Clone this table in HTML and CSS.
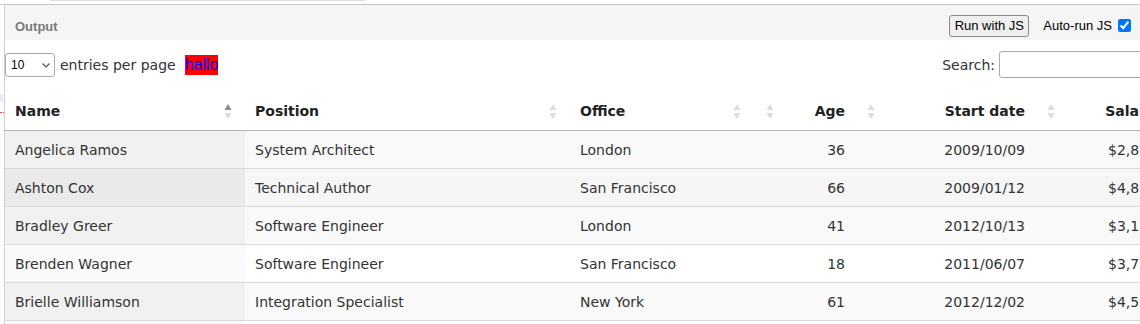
FILE: index.html
```html
<!DOCTYPE html>
<html>
<head>
<meta charset="utf-8">
<link rel="stylesheet" href="styles.css">
</head>
<body>
<div class="topstrip"><div class="tabedge"></div></div>
<div class="topline"></div>
<div class="page">
  <div class="gutter">
    <div class="mark-blue"></div>
    <div class="mark-red"></div>
  </div>
  <div class="frame">
    <div class="outbar">
      <span class="outtitle">Output</span>
      <div class="outactions">
        <button class="runbtn">Run with JS</button>
        <label class="autorun">Auto-run JS <input type="checkbox" checked></label>
      </div>
    </div>
    <div class="dt">
      <div class="controls">
        <div class="length">
          <div class="lenwrap">
            <select class="lensel"><option>10</option><option>25</option><option>50</option></select>
            <svg class="chev" width="8" height="5" viewBox="0 0 8 5"><path d="M0.5 0.5 L4 4 L7.5 0.5" fill="none" stroke="#555" stroke-width="1.2"/></svg>
          </div>
          <span class="lentext">entries per page</span>
          <span class="hallo">hallo</span>
        </div>
        <div class="search">
          <span>Search:</span>
          <input class="searchbox" type="text">
        </div>
      </div>
      <table class="grid">
        <colgroup>
          <col class="c-name"><col class="c-pos"><col class="c-office"><col class="c-age"><col class="c-date"><col class="c-sal">
        </colgroup>
        <thead>
          <tr>
            <th><div class="hd"><span>Name</span><svg class="sort" width="8" height="17" viewBox="0 0 8 17"><path class="up active" d="M4 1 L7.5 7 L0.5 7 Z"/><path class="dn" d="M0.5 10 L7.5 10 L4 16 Z"/></svg></div></th>
            <th><div class="hd"><span>Position</span><svg class="sort" width="8" height="17" viewBox="0 0 8 17"><path class="up" d="M4 1 L7.5 7 L0.5 7 Z"/><path class="dn" d="M0.5 10 L7.5 10 L4 16 Z"/></svg></div></th>
            <th><div class="hd"><span>Office</span><svg class="sort" width="8" height="17" viewBox="0 0 8 17"><path class="up" d="M4 1 L7.5 7 L0.5 7 Z"/><path class="dn" d="M0.5 10 L7.5 10 L4 16 Z"/></svg></div></th>
            <th><div class="hd num"><span>Age</span><svg class="sort" width="8" height="17" viewBox="0 0 8 17"><path class="up" d="M4 1 L7.5 7 L0.5 7 Z"/><path class="dn" d="M0.5 10 L7.5 10 L4 16 Z"/></svg></div></th>
            <th><div class="hd num"><span>Start date</span><svg class="sort" width="8" height="17" viewBox="0 0 8 17"><path class="up" d="M4 1 L7.5 7 L0.5 7 Z"/><path class="dn" d="M0.5 10 L7.5 10 L4 16 Z"/></svg></div></th>
            <th><div class="hd num"><span>Salary</span><svg class="sort" width="8" height="17" viewBox="0 0 8 17"><path class="up" d="M4 1 L7.5 7 L0.5 7 Z"/><path class="dn" d="M0.5 10 L7.5 10 L4 16 Z"/></svg></div></th>
          </tr>
        </thead>
        <tbody>
          <tr class="odd"><td class="sorted">Angelica Ramos</td><td>System Architect</td><td>London</td><td class="r">36</td><td class="r">2009/10/09</td><td class="r sal">$2,875</td></tr>
          <tr class="even hover"><td class="sorted">Ashton Cox</td><td>Technical Author</td><td>San Francisco</td><td class="r">66</td><td class="r">2009/01/12</td><td class="r sal">$4,850</td></tr>
          <tr class="odd"><td class="sorted">Bradley Greer</td><td>Software Engineer</td><td>London</td><td class="r">41</td><td class="r">2012/10/13</td><td class="r sal">$3,132</td></tr>
          <tr class="even"><td class="sorted">Brenden Wagner</td><td>Software Engineer</td><td>San Francisco</td><td class="r">18</td><td class="r">2011/06/07</td><td class="r sal">$3,750</td></tr>
          <tr class="odd"><td class="sorted">Brielle Williamson</td><td>Integration Specialist</td><td>New York</td><td class="r">61</td><td class="r">2012/12/02</td><td class="r sal">$4,525</td></tr>
          <tr class="even"><td class="sorted">Bruno Nash</td><td>Software Engineer</td><td>London</td><td class="r">38</td><td class="r">2011/05/03</td><td class="r sal">$1,635</td></tr>
        </tbody>
      </table>
    </div>
  </div>
</div>
</body>
</html>
```
FILE: styles.css
```css
html, body {
  margin: 0;
  padding: 0;
  overflow: hidden;
  background: #fff;
}
body {
  width: 1140px;
  height: 324px;
  font-family: "DejaVu Sans", Verdana, sans-serif;
  color: #333;
}
.topstrip {
  height: 4px;
}
.tabedge {
  margin-left: 50px;
  width: 315px;
  height: 1px;
  background: #dcdcdc;
}
.topline {
  height: 1px;
  background: #c6c6c6;
}
.page {
  display: flex;
  align-items: stretch;
  height: 400px;
}
.gutter {
  width: 4px;
  flex: none;
  display: flex;
  flex-direction: column;
}
.mark-blue {
  margin-top: 89px;
  width: 3px;
  height: 8px;
  background: #e3ecf8;
}
.mark-red {
  margin-top: 10px;
  width: 4px;
  height: 0;
  border-top: 1px dotted #e05050;
}
.frame {
  flex: 1;
  min-width: 0;
  border-left: 1px solid #cfcfcf;
}
.outbar {
  height: 35px;
  box-sizing: border-box;
  padding: 6px 9px 0 10px;
  background: #f5f5f5;
  display: flex;
  align-items: center;
  justify-content: space-between;
}
.outtitle {
  font-family: "Liberation Sans", Arial, sans-serif;
  font-weight: bold;
  font-size: 13px;
  color: #7a7a7a;
  padding-top: 1px;
}
.outactions {
  display: flex;
  align-items: center;
  gap: 14px;
}
.runbtn {
  font-family: "Liberation Sans", Arial, sans-serif;
  font-size: 13px;
  width: 80px;
  height: 22px;
  padding: 0;
  border: 1px solid #8a8a8a;
  border-radius: 3px;
  background: #efefef;
  color: #000;
}
.autorun {
  font-family: "Liberation Sans", Arial, sans-serif;
  font-size: 13px;
  color: #000;
  display: flex;
  align-items: center;
  gap: 3px;
}
.autorun input {
  width: 13px;
  height: 13px;
  margin: 0 0 0 3px;
  accent-color: #0075ff;
}
.dt {
  width: 1175px;
}
.controls {
  margin-top: 11px;
  height: 27px;
  display: flex;
  align-items: center;
  justify-content: space-between;
}
.length {
  display: flex;
  align-items: center;
  font-size: 14px;
}
.lenwrap {
  position: relative;
  width: 50px;
  height: 24px;
}
.lensel {
  appearance: none;
  -webkit-appearance: none;
  width: 50px;
  height: 24px;
  box-sizing: border-box;
  font-family: "Liberation Sans", Arial, sans-serif;
  font-size: 12px;
  border: 1px solid #aaa;
  border-radius: 3px;
  background: #fff;
  color: #000;
  padding: 0 0 0 5px;
  margin: 0;
}
.chev {
  position: absolute;
  left: 37px;
  top: 10px;
  pointer-events: none;
}
.lentext {
  margin-left: 5px;
}
.hallo {
  margin-left: 9px;
  font-family: "Liberation Sans", Arial, sans-serif;
  font-size: 16px;
  line-height: 20px;
  background: #ff0000;
  color: #0000ff;
}
.search {
  display: flex;
  align-items: center;
  gap: 4px;
  font-size: 14px;
}
.searchbox {
  width: 181px;
  height: 27px;
  box-sizing: border-box;
  border: 1px solid #aaa;
  border-radius: 3px;
  margin: 0;
  padding: 0 4px;
}
.grid {
  margin-top: 14px;
  width: 1160px;
  table-layout: fixed;
  border-collapse: collapse;
  border-spacing: 0;
  font-size: 14px;
}
.c-name { width: 240px; }
.c-pos { width: 325px; }
.c-office { width: 184px; }
.c-age { width: 101px; }
.c-date { width: 180px; }
.c-sal { width: 130px; }
.grid th {
  padding: 10px 10px;
  line-height: 18px;
  font-weight: bold;
  color: #222;
  text-align: left;
  border-bottom: 1px solid #b3b3b3;
}
.hd {
  display: flex;
  align-items: center;
  justify-content: space-between;
}
.hd .sort {
  margin-right: 3px;
  flex: none;
}
.hd.num {
  flex-direction: row-reverse;
}
.hd.num .sort {
  margin-right: 0;
  margin-left: 2px;
}
.sort path {
  fill: #dcdcdc;
}
.sort path.active {
  fill: #8c8c8c;
}
.grid td {
  padding: 11px 10px 9px;
  line-height: 17px;
  border-bottom: 1px solid #d9d9d9;
  white-space: nowrap;
  overflow: hidden;
}
.grid td.r {
  text-align: right;
}
.grid td.sal {
  padding-right: 8px;
}
.grid tr.odd td { background: #f9f9f9; }
.grid tr.odd td.sorted { background: #f1f1f1; }
.grid tr.even td { background: #fff; }
.grid tr.even td.sorted { background: #fafafa; }
.grid tr.hover td { background: #f6f6f6; }
.grid tr.hover td.sorted { background: #eaeaea; }
```
